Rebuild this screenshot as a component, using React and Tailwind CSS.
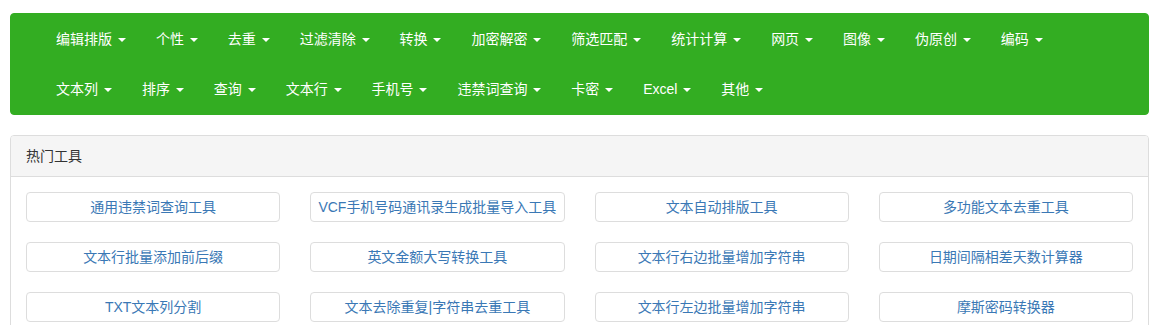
import React from 'react';

const navItems = [
    '编辑排版', '个性', '去重', '过滤清除', '转换', '加密解密', '筛选匹配', '统计计算',
    '网页', '图像', '伪原创', '编码', '文本列', '排序', '查询', '文本行', '手机号',
    '违禁词查询', '卡密', 'Excel', '其他'
];

const tools = [
    '通用违禁词查询工具', 'VCF手机号码通讯录生成批量导入工具', '文本自动排版工具', '多功能文本去重工具',
    '文本行批量添加前后缀', '英文金额大写转换工具', '文本行右边批量增加字符串', '日期间隔相差天数计算器',
    'TXT文本列分割', '文本去除重复|字符串去重工具', '文本行左边批量增加字符串', '摩斯密码转换器'
];

export default function App() {
    return (
        <div
            className="bg-white pl-[10px] pr-[18px] pt-[13px] text-[14px] leading-[20px] text-[#333]"
            style={{ fontFamily: '"Liberation Sans", "Noto Sans CJK SC", sans-serif' }}
        >
            {/* Navbar */}
            <nav className="bg-[#33ad22] border border-[#33ad22] rounded-[4px] pl-[30px] pr-[30px] mb-[20px]">
                <ul className="flex flex-wrap">
                    {navItems.map((item) => (
                        <li key={item}>
                            <a className="block px-[15px] py-[15px] text-white whitespace-nowrap cursor-pointer">
                                {item}{' '}
                                <span className="inline-block w-0 h-0 ml-[2px] align-middle border-t-[4px] border-t-white border-x-[4px] border-x-transparent"></span>
                            </a>
                        </li>
                    ))}
                </ul>
            </nav>

            {/* Hot tools */}
            <div className="border border-[#ddd] rounded-[4px] bg-white">
                <div className="bg-[#f5f5f5] border-b border-[#ddd] px-[15px] py-[10px] rounded-t-[3px]">
                    热门工具
                </div>
                <div className="p-[15px] grid grid-cols-4 gap-x-[30px] gap-y-[20px]">
                    {tools.map((tool) => (
                        <a
                            key={tool}
                            className="flex items-center justify-center h-[30px] border border-[#ddd] rounded-[4px] bg-white text-[#3a78b5] whitespace-nowrap cursor-pointer"
                        >
                            {tool}
                        </a>
                    ))}
                </div>
            </div>
        </div>
    );
}
